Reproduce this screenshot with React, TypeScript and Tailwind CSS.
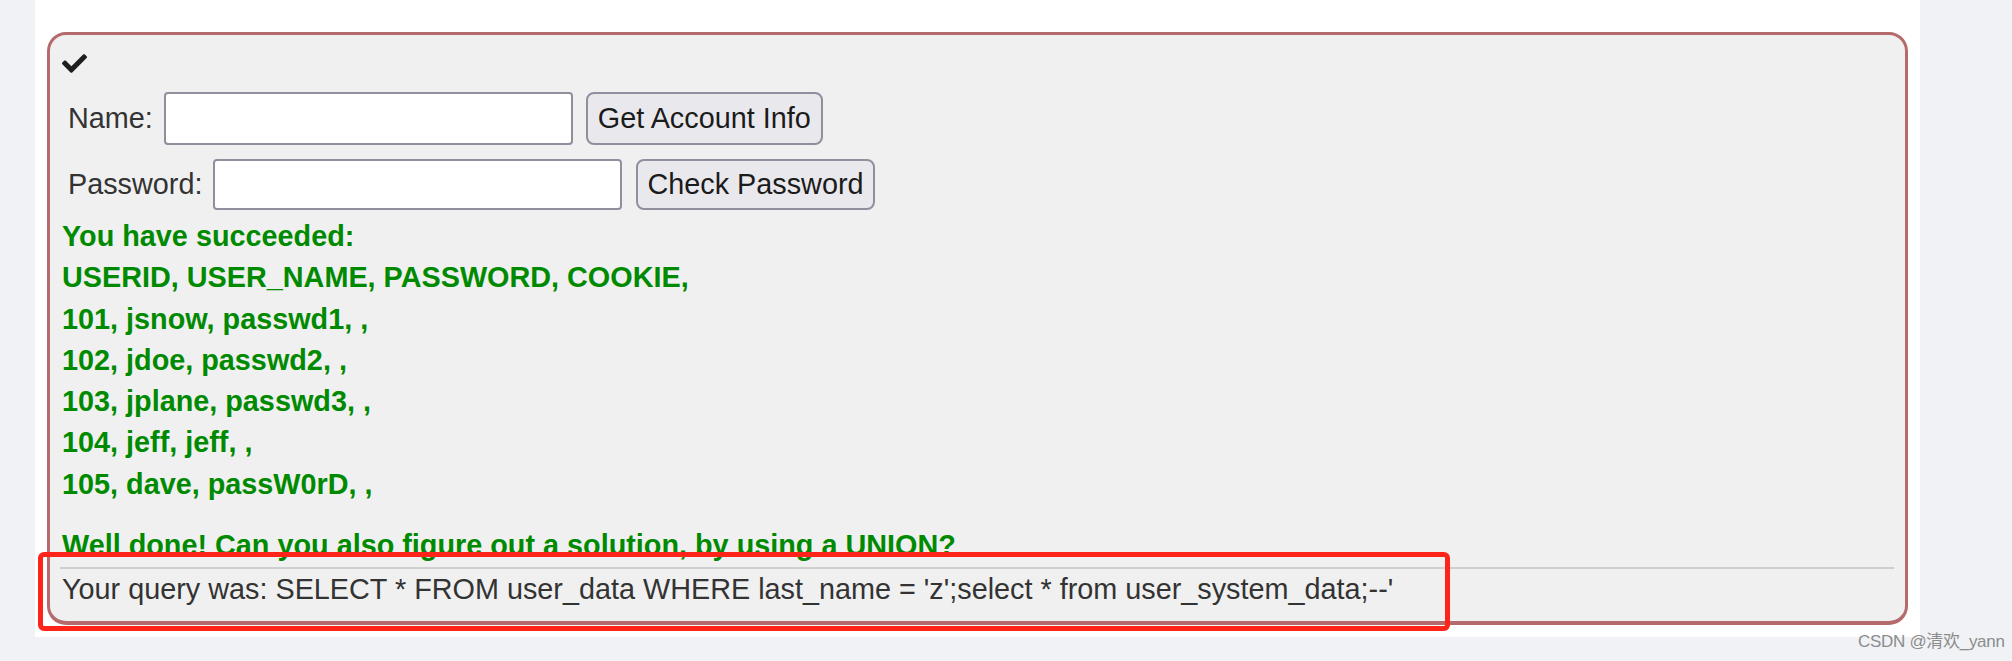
import React from 'react';
import { FaCheck } from 'react-icons/fa';

const rows = [
  'You have succeeded:',
  'USERID, USER_NAME, PASSWORD, COOKIE,',
  '101, jsnow, passwd1, ,',
  '102, jdoe, passwd2, ,',
  '103, jplane, passwd3, ,',
  '104, jeff, jeff, ,',
  '105, dave, passW0rD, ,',
];

const App: React.FC = () => {
  return (
    <div
      className="relative h-[661px] w-[2012px] overflow-hidden bg-[#f0f2f6] text-[28.8px] leading-[1.43] text-[#333]"
      style={{ fontFamily: '"Liberation Sans", Arial, sans-serif' }}
    >
      {/* White page panel */}
      <div className="ml-[35px] h-[637px] w-[1885px] bg-white px-[12px] pt-[32px]">
        {/* Assignment box */}
        <div className="h-[593px] w-[1861px] rounded-[19px] border-[3px] border-b-[4px] border-[#b56b6b] bg-[#f0f0f0] px-[10px] pt-[8px]">
          <div className="flex h-[41px] items-center pl-[2px]">
            <FaCheck size={25} className="text-[#1e1e1e]" />
          </div>

          <div className="mt-[8px] flex h-[53px] items-center">
            <span className="ml-[8px]">Name:</span>
            <input
              type="text"
              className="ml-[11px] h-[53px] w-[409px] rounded-[4px] border-2 border-[#8f8f9d] bg-white"
            />
            <button
              type="button"
              className="ml-[13px] h-[53px] rounded-[8px] border-2 border-[#8f8f9d] bg-[#e9e9ed] px-[10px] text-[#1b1b1b]"
            >
              Get Account Info
            </button>
          </div>

          <div className="mt-[14px] flex h-[51px] items-center">
            <span className="ml-[8px]">Password:</span>
            <input
              type="password"
              className="ml-[11px] h-[51px] w-[409px] rounded-[4px] border-2 border-[#8f8f9d] bg-white"
            />
            <button
              type="button"
              className="ml-[14px] h-[51px] rounded-[8px] border-2 border-[#8f8f9d] bg-[#e9e9ed] px-[9px] text-[#1b1b1b]"
            >
              Check Password
            </button>
          </div>

          {/* Feedback */}
          <div className="mt-[6px] pl-[2px] font-bold leading-[41.3px] text-[#008a00]">
            {rows.map((r) => (
              <div key={r}>{r}</div>
            ))}
            <div className="mt-[20px]">Well done! Can you also figure out a solution, by using a UNION?</div>
          </div>

          <div className="mt-px h-[2px] w-[1834px] bg-[#cfcfcf]" />
          <div className="pl-[2px] leading-[41px]">
            Your query was: SELECT * FROM user_data WHERE last_name = 'z';select * from user_system_data;--'
          </div>
        </div>
      </div>

      {/* Red annotation frame */}
      <div className="absolute left-[38px] top-[552px] h-[79px] w-[1412px] rounded-[6px] border-[5px] border-[#ff2419]" />

      {/* Watermark */}
      <div
        className="absolute left-[1858px] top-[631px] text-[17px] leading-[22px] tracking-[-0.3px] text-[#8c8c8c]"
        style={{ fontFamily: '"Liberation Sans", "Noto Sans CJK SC", sans-serif' }}
      >
        CSDN @清欢_yann
      </div>
    </div>
  );
};

export default App;
